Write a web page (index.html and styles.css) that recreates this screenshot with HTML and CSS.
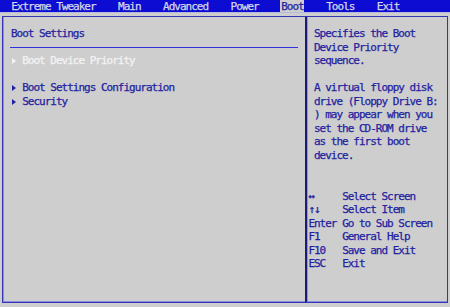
FILE: index.html
```html
<!DOCTYPE html>
<html>
<head>
<meta charset="utf-8">
<link rel="stylesheet" href="styles.css">
</head>
<body>
<div class="menubar"><span class="tab">Extreme Tweaker</span><span class="tab">Main</span><span class="tab">Advanced</span><span class="tab">Power</span><span class="tab active">Boot</span><span class="tab">Tools</span><span class="tab">Exit</span></div>
<div class="frame">
  <div class="left">
    <div class="row title">Boot Settings</div>
    <div class="rule"></div>
    <div class="row item selected"><span class="arrow"></span><span>Boot Device Priority</span></div>
    <div class="row blank"></div>
    <div class="row item"><span class="arrow"></span><span>Boot Settings Configuration</span></div>
    <div class="row item"><span class="arrow"></span><span>Security</span></div>
  </div>
  <div class="right">
    <div class="help">
      <div class="row">Specifies the Boot</div>
      <div class="row">Device Priority</div>
      <div class="row">sequence.</div>
      <div class="row blank"></div>
      <div class="row">A virtual floppy disk</div>
      <div class="row">drive (Floppy Drive B:</div>
      <div class="row">) may appear when you</div>
      <div class="row">set the CD-ROM drive</div>
      <div class="row">as the first boot</div>
      <div class="row">device.</div>
    </div>
    <div class="keys">
      <div class="row"><span class="key">↔</span><span>Select Screen</span></div>
      <div class="row"><span class="key">↑↓</span><span>Select Item</span></div>
      <div class="row"><span class="key">Enter</span><span>Go to Sub Screen</span></div>
      <div class="row"><span class="key">F1</span><span>General Help</span></div>
      <div class="row"><span class="key">F10</span><span>Save and Exit</span></div>
      <div class="row"><span class="key">ESC</span><span>Exit</span></div>
    </div>
  </div>
</div>
</body>
</html>
```
FILE: styles.css
```css
:root {
  --c: 5.625px;
  --r: 13.55px;
  --blue: #0c0cd2;
  --ink: #2222a0;
  --bg: #cecece;
}
* { box-sizing: border-box; }
html, body {
  margin: 0;
  padding: 0;
  width: 450px;
  height: 307px;
  overflow: hidden;
  background: var(--bg);
}
body {
  font-family: "DejaVu Sans Mono", "Liberation Mono", monospace;
  font-size: 11px;
  letter-spacing: -1px;
  color: var(--ink);
  -webkit-text-stroke: 0.25px currentColor;
}
.menubar {
  height: 13px;
  line-height: 13px;
  background: var(--blue);
  color: #d6d6e6;
  padding-left: calc(var(--c) * 2);
  display: flex;
  white-space: pre;
  border-bottom: 1px solid #b8b8d8;
}
.tab {
  margin-right: calc(var(--c) * 4);
}
.tab.active {
  background: var(--bg);
  color: var(--ink);
  padding-left: 1px;
  margin-left: -1px;
}
.frame {
  margin: 3px 2px 0 2px;
  height: 287px;
  border: 1px solid #3434b4;
  box-shadow: inset 1px 0 0 #8c8ce0, inset 0 -1px 0 #8c8ce0;
  display: flex;
}
.row {
  height: var(--r);
  line-height: var(--r);
  white-space: pre;
}
.left {
  width: 302px;
  padding-top: 10px;
  padding-left: 8px;
}
.rule {
  height: var(--r);
  margin: 0 7px 0 -1px;
  position: relative;
}
.rule::after {
  content: "";
  position: absolute;
  left: 0;
  right: 0;
  top: 6px;
  border-top: 1px solid #3030dc;
}
.item {
  display: flex;
  align-items: center;
}
.arrow {
  width: 0;
  height: 0;
  border-left: 4px solid var(--ink);
  border-top: 3px solid transparent;
  border-bottom: 3px solid transparent;
  margin-left: 1px;
  margin-right: calc(var(--c) * 2 - 5px);
}
.selected {
  color: #f4f4f4;
}
.selected .arrow {
  border-left-color: #f4f4f4;
}
.right {
  flex: 1;
  border-left: 2px solid #1c1c78;
  box-shadow: inset 1px 0 0 #9090e0;
  padding-top: 10px;
  padding-left: 7px;
}
.keys {
  margin-top: calc(var(--r) * 2);
  margin-left: calc(var(--c) * -1);
}
.keys .row {
  display: flex;
}
.key {
  width: calc(var(--c) * 6);
  flex: none;
}
```
